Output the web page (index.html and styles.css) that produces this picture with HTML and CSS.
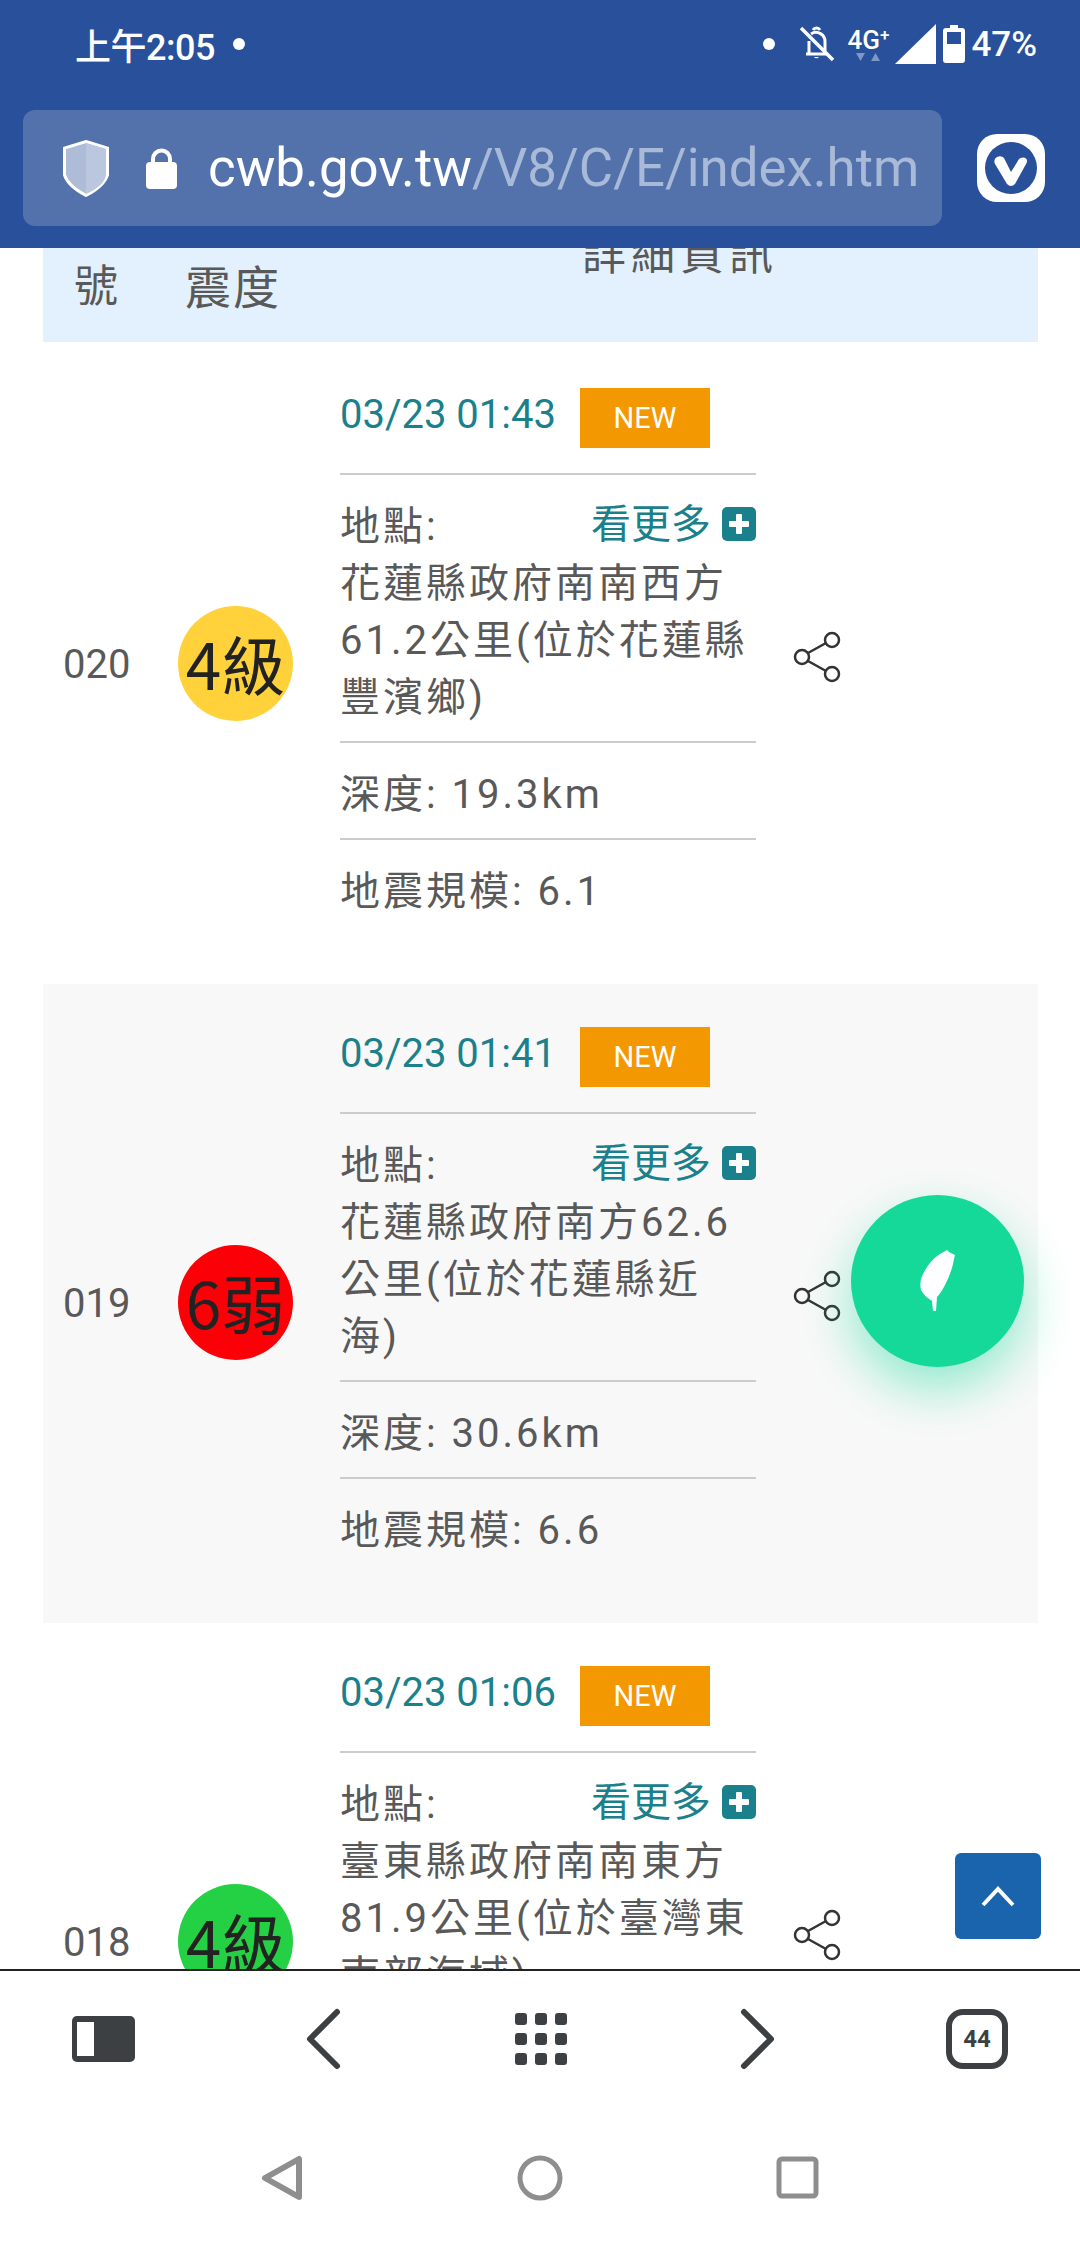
FILE: index.html
```html
<!DOCTYPE html>
<html lang="zh-Hant">
<head>
<meta charset="utf-8">
<title>地震資訊</title>
<link rel="stylesheet" href="styles.css">
</head>
<body>
<div class="page">
	<header class="top">
		<div class="status">
			<div class="status-left">
				<span class="clock">上午2:05</span>
				<span class="dot"></span>
			</div>
			<div class="status-right">
				<span class="dot"></span>
				<svg class="ic-bell" width="36" height="36" viewBox="0 0 36 36" fill="none" stroke="#fff" stroke-width="3">
					<path d="M7 28h21M10 28V15M12 8a9 9 0 0 1 14 8v9" />
					<path d="M15 31a3 3 0 0 0 5 0" fill="#fff" stroke="none"/>
					<path d="M14 4a4 4 0 0 1 7 0" />
					<path d="M2 2l32 32" stroke-width="3.5"/>
				</svg>
				<div class="net">
					<span class="net-label">4G<sup>+</sup></span>
					<svg width="26" height="9" viewBox="0 0 26 9" fill="#7f97c4"><path d="M1 0h9l-4.5 8zM16 8h9L20.500 0z"/></svg>
				</div>
				<svg width="41" height="40" viewBox="0 0 41 40" fill="#fff"><path d="M41 0v40H0z"/></svg>
				<svg width="22" height="38" viewBox="0 0 22 38"><path fill="#fff" d="M7 0h8v3h4a3 3 0 0 1 3 3v29a3 3 0 0 1-3 3H3a3 3 0 0 1-3-3V6a3 3 0 0 1 3-3h4z"/><path fill="#29509a" d="M4 7h14v12H4z"/></svg>
				<span class="batt">47%</span>
			</div>
		</div>
		<div class="addr-row">
			<div class="addr">
				<svg width="46" height="57" viewBox="0 0 46 57">
					<path d="M23 1.500 44.500 8v27Q41 46 23 55.500 5 46 1.500 35V8z" fill="#aebcd8" stroke="#fff" stroke-width="3"/>
					<path d="M23 3v51Q41 46 43 35V9z" fill="#bac7df"/>
				</svg>
				<svg class="ic-lock" width="31" height="41" viewBox="0 0 31 41">
					<path d="M7 17v-6a8.500 8.500 0 0 1 17 0v6" fill="none" stroke="#fff" stroke-width="4"/>
					<rect y="14" width="31" height="27" rx="4" fill="#fff"/>
				</svg>
				<div class="url"><span class="url-host">cwb.gov.tw</span><span class="url-path">/V8/C/E/index.htm</span></div>
			</div>
			<svg class="logo" width="68" height="68" viewBox="0 0 68 68">
				<rect width="68" height="68" rx="20" fill="#fff"/>
				<circle cx="34" cy="34" r="26" fill="#29509a"/>
				<path d="M18 30Q16 25 20 23 24 21 27 24L34 38 42 25Q43 23.500 46 23.500 50 23.500 50 27 50 29 49 30L38 50Q34 54 30 50z" fill="#fff"/>
			</svg>
		</div>
	</header>

	<main class="content">
		<div class="thead">
			<span class="th-num">號</span>
			<span class="th-level">震度</span>
			<span class="th-info">詳細資訊</span>
		</div>

		<section class="row">
			<span class="num">020</span>
			<span class="level yellow">4級</span>
			<div class="info">
				<div class="when"><span class="date">03/23 01:43</span><span class="new">NEW</span></div>
				<div class="block">
					<div class="place-head"><span>地點:</span><a class="more">看更多<i class="plus"></i></a></div>
					<div>花蓮縣政府南南西方<br>61.2公里(位於花蓮縣<br>豐濱鄉)</div>
				</div>
				<div class="block">深度: 19.3km</div>
				<div class="block">地震規模: 6.1</div>
			</div>
			<svg class="share" width="48" height="52" viewBox="0 0 48 52" fill="none" stroke="#333" stroke-width="2.500"><circle cx="39" cy="9" r="7"/><circle cx="9" cy="26" r="7"/><circle cx="39" cy="43" r="7"/><path d="M15 22l18-10M15 30l18 10"/></svg>
		</section>

		<section class="row grey">
			<span class="num">019</span>
			<span class="level red">6弱</span>
			<div class="info">
				<div class="when"><span class="date">03/23 01:41</span><span class="new">NEW</span></div>
				<div class="block">
					<div class="place-head"><span>地點:</span><a class="more">看更多<i class="plus"></i></a></div>
					<div>花蓮縣政府南方62.6<br>公里(位於花蓮縣近<br>海)</div>
				</div>
				<div class="block">深度: 30.6km</div>
				<div class="block">地震規模: 6.6</div>
			</div>
			<svg class="share" width="48" height="52" viewBox="0 0 48 52" fill="none" stroke="#333" stroke-width="2.500"><circle cx="39" cy="9" r="7"/><circle cx="9" cy="26" r="7"/><circle cx="39" cy="43" r="7"/><path d="M15 22l18-10M15 30l18 10"/></svg>
		</section>

		<section class="row">
			<span class="num">018</span>
			<span class="level green">4級</span>
			<div class="info">
				<div class="when"><span class="date">03/23 01:06</span><span class="new">NEW</span></div>
				<div class="block">
					<div class="place-head"><span>地點:</span><a class="more">看更多<i class="plus"></i></a></div>
					<div>臺東縣政府南南東方<br>81.9公里(位於臺灣東<br>南部海域)</div>
				</div>
				<div class="block">深度: 10.0km</div>
				<div class="block">地震規模: 5.0</div>
			</div>
			<svg class="share" width="48" height="52" viewBox="0 0 48 52" fill="none" stroke="#333" stroke-width="2.500"><circle cx="39" cy="9" r="7"/><circle cx="9" cy="26" r="7"/><circle cx="39" cy="43" r="7"/><path d="M15 22l18-10M15 30l18 10"/></svg>
		</section>
	</main>

	<footer class="bottom">
		<div class="tools">
			<svg width="64" height="64" viewBox="0 0 64 64"><rect y="9" width="63" height="46" rx="5" fill="#3c4043"/><rect x="5" y="15" width="17" height="34" fill="#fff"/></svg>
			<svg width="64" height="64" viewBox="0 0 64 64" fill="none" stroke="#3c4043" stroke-width="6" stroke-linecap="round" stroke-linejoin="round"><path d="M47 5 20 32l27 27"/></svg>
			<svg width="64" height="64" viewBox="0 0 64 64" fill="#3c4043"><rect x="6" y="6" width="12" height="12" rx="3"/><rect x="26" y="6" width="12" height="12" rx="3"/><rect x="46" y="6" width="12" height="12" rx="3"/><rect x="6" y="26" width="12" height="12" rx="3"/><rect x="26" y="26" width="12" height="12" rx="3"/><rect x="46" y="26" width="12" height="12" rx="3"/><rect x="6" y="46" width="12" height="12" rx="3"/><rect x="26" y="46" width="12" height="12" rx="3"/><rect x="46" y="46" width="12" height="12" rx="3"/></svg>
			<svg width="64" height="64" viewBox="0 0 64 64" fill="none" stroke="#3c4043" stroke-width="6" stroke-linecap="round" stroke-linejoin="round"><path d="M17 5l27 27-27 27"/></svg>
			<span class="tabs">44</span>
		</div>
		<div class="nav">
			<svg width="60" height="60" viewBox="0 0 60 60" fill="none" stroke="#8e8e8e" stroke-width="6" stroke-linejoin="round"><path d="M47 11v38L13 30z"/></svg>
			<svg width="60" height="60" viewBox="0 0 60 60" fill="none" stroke="#8e8e8e" stroke-width="5"><circle cx="30" cy="30" r="20"/></svg>
			<svg width="60" height="60" viewBox="0 0 60 60" fill="none" stroke="#8e8e8e" stroke-width="5"><rect x="11" y="11" width="37" height="37" rx="3"/></svg>
		</div>
	</footer>

	<a class="fab">
		<svg width="35" height="62" viewBox="0 0 35 62" fill="#fff"><path d="M27 0l2 2 6 3-1 4-1 5Q30 26 25 35q-4 8-8 12l-1 14h-3l-1-10Q4 46 1 40-1 31 3 24 10 10 20 4z"/></svg>
	</a>
	<a class="to-top">
		<svg width="36" height="22" viewBox="0 0 36 22" fill="none" stroke="#fff" stroke-width="4"><path d="M3 20 18 4l15 16"/></svg>
	</a>
</div>
</body>
</html>
```

FILE: styles.css
```css
*{margin:0;padding:0;box-sizing:border-box;}
body{background:#fff;font-family:Roboto,"Noto Sans CJK TC",sans-serif;color:#595959;}
.page{width:1080px;height:2246px;position:relative;overflow:hidden;display:flex;flex-direction:column;}

/* top bar */
.top{height:248px;background:#29509a;color:#fff;flex:none;position:relative;z-index:2;}
.status{height:88px;display:flex;justify-content:space-between;align-items:center;padding:0 43px 0 75px;}
.status-left{display:flex;align-items:center;gap:18px;}
.clock{font-size:36px;font-weight:500;letter-spacing:-.5px;}
.dot{width:12px;height:12px;border-radius:50%;background:#fff;}
.status-right{display:flex;align-items:center;}
.ic-bell{margin:0 6px 0 24px;}
.net{width:54px;display:flex;flex-direction:column;align-items:center;}
.net-label{font-size:26px;line-height:26px;font-weight:500;}
.net-label sup{font-size:17px;line-height:0;vertical-align:8px;}
.batt{font-size:35px;font-weight:500;margin-left:6px;}
.status-right svg:nth-of-type(3){margin-left:7px;}
.addr-row{display:flex;align-items:center;padding:0 35px 0 23px;margin-top:22px;height:116px;justify-content:space-between;}
.addr{width:919px;height:116px;background:#5372ab;border-radius:12px;display:flex;align-items:center;padding-left:40px;overflow:hidden;}
.ic-lock{margin:0 31px 0 37px;flex:none;}
.addr svg{flex:none;}
.url{font-size:52.800px;white-space:nowrap;overflow:hidden;width:716px;}
.url-path{color:#a9b9d8;}

/* table */
.content{flex:1;overflow:hidden;padding:0 42px 0 43px;min-height:0;}
.thead{height:94px;margin-bottom:3px;background:#e2f1fd;display:flex;font-size:44px;line-height:60px;}
.th-num{margin:9px 0 0 31px;}
.th-level{margin:10px 0 0 67px;font-size:46px;letter-spacing:2px;}
.th-info{margin:-23px 0 0 301px;letter-spacing:5px;}
.row{height:639px;display:flex;align-items:center;padding-left:20px;}
.grey{background:#f8f8f8;}
.num{width:115px;font-size:40px;}
.level{width:115px;height:115px;margin-top:-2px;padding-bottom:4px;border-radius:50%;display:flex;align-items:center;justify-content:center;font-size:64px;color:#222;font-family:"Noto Sans CJK TC",sans-serif;flex:none;}
.yellow{background:#ffd23c;}
.red{background:#fb0006;}
.green{background:#25d144;}
.info{width:416px;margin:0 37px 6px 47px;flex:none;font-size:40px;line-height:57px;letter-spacing:3px;}
.when{height:85px;display:flex;align-items:flex-start;gap:24px;letter-spacing:0;}
.date{font-size:40px;line-height:54px;color:#1a808b;}
.new{width:130px;height:60px;background:#f39800;color:#fff;font-size:29px;line-height:60px;text-align:center;}
.block{border-top:2px solid #ccc;padding:23px 0 15px;}
.place-head{display:flex;justify-content:space-between;align-items:center;}
.more{color:#1a808b;letter-spacing:0;display:flex;align-items:center;gap:11px;margin-top:-5px;}
.plus{width:34px;height:34px;border-radius:5px;background:#1a808b;position:relative;display:block;}
.plus::before,.plus::after{content:"";position:absolute;background:#fff;border-radius:1px;}
.plus::before{left:7px;right:7px;top:14px;height:6px;}
.plus::after{top:7px;bottom:7px;left:14px;width:6px;}
.share{flex:none;margin-top:-16px;}

/* bottom */
.bottom{height:277px;flex:none;background:#fff;border-top:2px solid #222;position:relative;z-index:2;}
.tools{display:flex;justify-content:space-between;align-items:center;padding:0 71px 0 72px;margin-top:36px;height:64px;}
.tabs{width:62px;height:60px;border:6px solid #3c4043;border-radius:17px;display:flex;align-items:center;justify-content:center;font-size:24px;font-weight:700;color:#3c4043;margin:0 1px;}
.nav{display:flex;justify-content:center;gap:198px;margin-top:77px;}

/* floating buttons */
.fab{position:absolute;left:851px;top:1195px;width:173px;height:172px;border-radius:50%;background:#14d999;box-shadow:0 22px 50px rgba(20,217,153,.45);display:flex;align-items:center;justify-content:center;}
.to-top{position:absolute;left:955px;top:1853px;width:86px;height:86px;border-radius:6px;background:#1a63ad;display:flex;align-items:center;justify-content:center;}
```
